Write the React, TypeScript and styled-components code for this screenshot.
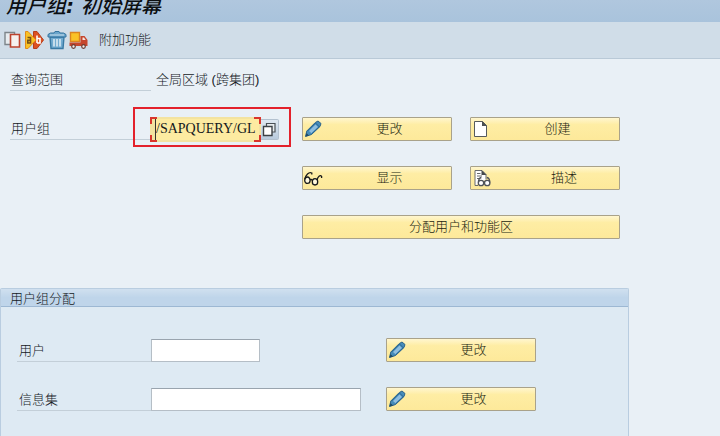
import React from "react";
import styled, { createGlobalStyle } from "styled-components";

const GlobalStyle = createGlobalStyle`
  * { box-sizing: border-box; }
  html, body { margin: 0; background: #e9f0f6; }
  body, button, input {
    font-family: "Liberation Sans", "Noto Sans CJK SC", sans-serif;
    font-size: 13px;
    font-weight: 300;
    line-height: 18px;
    color: #14191d;
  }
`;

const Page = styled.main`
  display: flex;
  flex-direction: column;
  min-height: 100vh;
`;

const TitleBar = styled.header`
  display: flex;
  align-items: flex-end;
  height: 22px;
  padding: 0 6px 6px;
  background: linear-gradient(#b0c7de, #a9c3dc);
`;

const Title = styled.h1`
  margin: 0;
  font-family: "DejaVu Sans", "Noto Sans CJK SC", sans-serif;
  font-size: 20px;
  line-height: 20px;
  font-weight: 500;
  font-style: italic;
  white-space: pre;
  color: #0c0f12;
`;

const Toolbar = styled.nav`
  display: flex;
  align-items: center;
  gap: 2px;
  height: 37px;
  padding: 0 4px;
  background: #d0dde8;
  border-bottom: 1px solid #b9c9d7;
`;

const ToolButton = styled.button`
  display: flex;
  align-items: center;
  height: 24px;
  padding: 0;
  border: 0;
  background: none;
`;

const TextTool = styled(ToolButton)`
  margin-left: 8px;
`;

const Selection = styled.section`
  display: grid;
  grid-template-columns: 141px 115px 150px 150px;
  column-gap: 18px;
  row-gap: 25px;
  padding: 9px 10px 0;
`;

const Label = styled.label`
  height: 23px;
  padding: 3px 0 0 1px;
  border-bottom: 1px solid #c3cfd8;
`;

const GroupLabel = styled(Label)`
  height: 24px;
  padding: 4px 0 0 2px;
`;

const Value = styled.output`
  grid-column: 2 / -1;
  height: 24px;
  margin-left: -13px;
  padding-top: 3px;
`;

const FieldCell = styled.div`
  position: relative;
  display: flex;
  align-items: center;
  height: 24px;
  margin-left: -19px;
`;

const Highlight = styled.span`
  position: absolute;
  top: -10px;
  left: -17px;
  width: 158px;
  height: 40px;
  border: 2px solid #e3212b;
  pointer-events: none;
`;

const tick = "linear-gradient(#d9352c, #d9352c)";

const FocusFrame = styled.span`
  display: flex;
  width: 111px;
  height: 25px;
  padding: 2px;
  background:
    ${tick} 0 0 / 7px 2px, ${tick} 100% 0 / 7px 2px,
    ${tick} 0 100% / 7px 2px, ${tick} 100% 100% / 7px 2px,
    ${tick} 0 0 / 2px 7px, ${tick} 100% 0 / 2px 7px,
    ${tick} 0 100% / 2px 7px, ${tick} 100% 100% / 2px 7px,
    #f3e3a0;
  background-repeat: no-repeat;
`;

const GroupInput = styled.input`
  width: 100%;
  min-width: 0;
  margin-left: 3px;
  padding: 0;
  border: 0;
  border-left: 1px solid #35332e;
  outline: 0;
  background: #fdeba1;
  font-family: "Liberation Serif", serif;
  font-size: 14px;
  font-weight: 400;
`;

const MatchButton = styled.button`
  display: flex;
  flex: none;
  align-items: center;
  justify-content: center;
  width: 18px;
  height: 21px;
  padding: 0;
  border: 1px solid #b3c1cf;
  border-left: 0;
  border-radius: 0 2px 2px 0;
  background: linear-gradient(#dfe8f1, #b9cbdd);
`;

const ActionButton = styled.button<{ $start?: string; $iconWidth?: number }>`
  display: grid;
  grid-template-columns: ${(p) => p.$iconWidth ?? 25}px 1fr;
  align-items: center;
  grid-column: ${(p) => p.$start ?? "auto"};
  height: 24px;
  padding: 0;
  border: 1px solid #a9a28a;
  border-radius: 1px;
  background: linear-gradient(#fff6cf, #feeda4 30%, #fde99a);
  text-align: center;
  color: #221e10;
`;

const WideButton = styled(ActionButton)`
  display: block;
`;

const Group = styled.section`
  flex: 1;
  width: calc(100% - 91px);
  margin-top: 49px;
  border: 1px solid #b9cde0;
  border-bottom: 0;
  border-radius: 2px 2px 0 0;
  background: #deeaf3;
`;

const GroupTitle = styled.h2`
  height: 18px;
  margin: 0;
  padding: 1px 0 0 9px;
  border-bottom: 1px solid #9db8d3;
  background: linear-gradient(#d0e0ef, #bfd5ea 50%);
  font-size: 13px;
  font-weight: 300;
  line-height: 18px;
`;

const GroupRows = styled.div`
  display: grid;
  grid-template-columns: 134px 235px 150px;
  row-gap: 25px;
  padding: 31px 16px 20px;
`;

const TextInput = styled.input<{ $width: number }>`
  width: ${(p) => p.$width}px;
  height: 23px;
  margin-top: 1px;
  padding: 0 3px;
  border: 1px solid #b5bec6;
  border-top-color: #99a4ae;
  border-radius: 0;
  background: #fff;
`;

const PencilIcon = () => (
  <svg width="20" height="20" viewBox="0 0 20 20" aria-hidden="true">
    <path d="M2.5 17.5 3.8 12 12.3 3.5 15 2 18 4.5 17 7.5 8.5 15.5Z" fill="#468bb9" stroke="#2d6388" />
    <path d="m6 12 6.5-6.5 2.5 2.5-6.5 6.3Z" fill="#8dbde0" />
    <path d="m4.5 12 8-8M8.5 15l8-7.5M12.5 4l4 4" stroke="#286795" fill="none" />
    <path d="m2.5 17.5 1-3.5 2.5 2.5Z" fill="#204b66" />
  </svg>
);

const GlassesIcon = () => (
  <svg width="20" height="20" viewBox="0 0 20 20" fill="none" stroke="#17191a" strokeWidth="1.3" aria-hidden="true">
    <ellipse cx="4.4" cy="12.2" rx="2.7" ry="3.2" fill="#fff8dc" />
    <ellipse cx="12" cy="13.8" rx="2.7" ry="3.2" fill="#fff8dc" />
    <path d="M1.9 11.2C2.6 7 5.8 3.6 8.8 5v1.5M7 12q1.2-1.6 2.4.6M14.2 12C14.6 8.6 17.2 6.6 18.6 8.4v1.6" />
  </svg>
);

const PageIcon = () => (
  <svg width="20" height="20" viewBox="0 0 20 20" aria-hidden="true">
    <path d="M3.5 2.5h8l4 4v11h-12Z" fill="#fff" stroke="#555a5c" />
    <path d="M11 2v5h5Z" fill="#4c5153" />
  </svg>
);

const DescriptionIcon = () => (
  <svg width="22" height="20" viewBox="0 0 22 20" aria-hidden="true">
    <path d="M4 17.500v-15h7l4 4v5M4 17.500h3" fill="#fff" stroke="#686b6d" />
    <path d="M10.500 2v5h5Z" fill="#45494c" />
    <path d="M6 5.500h3.500M6 8h5M6 10.500h2" stroke="#686b6d" />
    <g stroke="#50545a" strokeWidth="1.3" fill="#fff">
      <circle cx="10" cy="15" r="2.7" />
      <circle cx="16.2" cy="15" r="2.7" />
      <path d="M7.4 14.5q0-4.5 3-5M18.8 14.5q0-4.5-3-5M12.5 14q.7-.6 1.2 0" fill="none" />
    </g>
  </svg>
);

const VariantIcon = () => (
  <svg width="19" height="20" viewBox="0 0 19 20" aria-hidden="true">
    <path d="M1 2.5h9.5v12H1Z" fill="#e7ecef" stroke="#7d858a" strokeWidth="1.4" />
    <path d="M6.5 4.5h9V17h-9Z" fill="#f6f0ee" stroke="#bd422e" strokeWidth="1.6" />
  </svg>
);

const RenameIcon = () => (
  <svg width="20" height="20" viewBox="0 0 20 20" aria-hidden="true">
    <path d="M8.500 1.500h3.500L18.500 10 12 18.500H8.500Z" fill="#dc5222" stroke="#b73d1c" />
    <path d="M0.500 1.500h2.500L11 10l-8 8.500h-2.500Z" fill="#f8c124" stroke="#e28b1a" />
    <g fill="none" strokeWidth="1.6">
      <path d="M2.500 7.500h3V13H2.800v-2.800h2.700" stroke="#735018" />
      <path d="M12 5.500V13M12 8.500h3V13h-3" stroke="#fff" />
    </g>
  </svg>
);

const TrashIcon = () => (
  <svg width="20" height="20" viewBox="0 0 20 20" aria-hidden="true">
    <path d="M3 7h14l-1 11.500H4Z" fill="#72abd0" stroke="#397aa4" strokeWidth="1.4" />
    <path d="M7 9v7.500M10 9v7.500M13 9v7.500" stroke="#e8f2f8" strokeWidth="1.4" />
    <path d="M1 4.500 3.500 3H7l1-1.500h4L13 3h3.500L19 4.500V7H1Z" fill="#6aa5cb" stroke="#3575a0" />
    <path d="M3 5h14" stroke="#c8dfed" />
  </svg>
);

const TruckIcon = () => (
  <svg width="20" height="20" viewBox="0 0 20 20" aria-hidden="true">
    <path d="M1.500 2.500h9v9h-9Z" fill="#fac328" stroke="#dc8521" strokeWidth="1.4" />
    <path d="M0.500 12.500h11V6h4l3 4v6h-18Z" fill="#c6462d" />
    <path d="M13.500 7.500H15l1.700 2.500h-3.200Z" fill="#f3e5df" />
    <g fill="#f1eeeb" stroke="#6c3c32" strokeWidth="1.2">
      <circle cx="4.500" cy="16.500" r="1.800" />
      <circle cx="14.500" cy="16.500" r="1.800" />
    </g>
  </svg>
);

const MatchIcon = () => (
  <svg width="15" height="15" viewBox="0 0 15 15" aria-hidden="true">
    <path d="M4.500 1.500h8.500v8.500H4.500Z" fill="#e8ecee" stroke="#4a5055" strokeWidth="1.2" />
    <path d="M1.500 4.500h8.500v9H1.500Z" fill="#fff" stroke="#3c4145" strokeWidth="1.4" />
  </svg>
);

const assignments = [
  { id: "user", label: "用户", width: 109 },
  { id: "infoset", label: "信息集", width: 210 },
];

export default function App() {
  return (
    <Page>
      <GlobalStyle />
      <TitleBar>
        <Title>用户组<b>: </b>初始屏幕</Title>
      </TitleBar>
      <Toolbar>
        <ToolButton aria-label="复制"><VariantIcon /></ToolButton>
        <ToolButton aria-label="重命名"><RenameIcon /></ToolButton>
        <ToolButton aria-label="删除"><TrashIcon /></ToolButton>
        <ToolButton aria-label="传输"><TruckIcon /></ToolButton>
        <TextTool>附加功能</TextTool>
      </Toolbar>
      <Selection>
        <Label htmlFor="scope">查询范围</Label>
        <Value id="scope">全局区域 (跨集团)</Value>

        <Label htmlFor="group">用户组</Label>
        <FieldCell>
          <FocusFrame>
            <GroupInput id="group" defaultValue="/SAPQUERY/GL" />
          </FocusFrame>
          <MatchButton aria-label="选择用户组"><MatchIcon /></MatchButton>
          <Highlight />
        </FieldCell>
        <ActionButton><PencilIcon /><span>更改</span></ActionButton>
        <ActionButton><PageIcon /><span>创建</span></ActionButton>

        <ActionButton $start="3"><GlassesIcon /><span>显示</span></ActionButton>
        <ActionButton $start="4" $iconWidth={38}><DescriptionIcon /><span>描述</span></ActionButton>

        <WideButton $start="3 / 5">分配用户和功能区</WideButton>
      </Selection>
      <Group>
        <GroupTitle>用户组分配</GroupTitle>
        <GroupRows>
          {assignments.map((item) => (
            <React.Fragment key={item.id}>
              <GroupLabel htmlFor={item.id}>{item.label}</GroupLabel>
              <TextInput id={item.id} $width={item.width} />
              <ActionButton><PencilIcon /><span>更改</span></ActionButton>
            </React.Fragment>
          ))}
        </GroupRows>
      </Group>
    </Page>
  );
}
